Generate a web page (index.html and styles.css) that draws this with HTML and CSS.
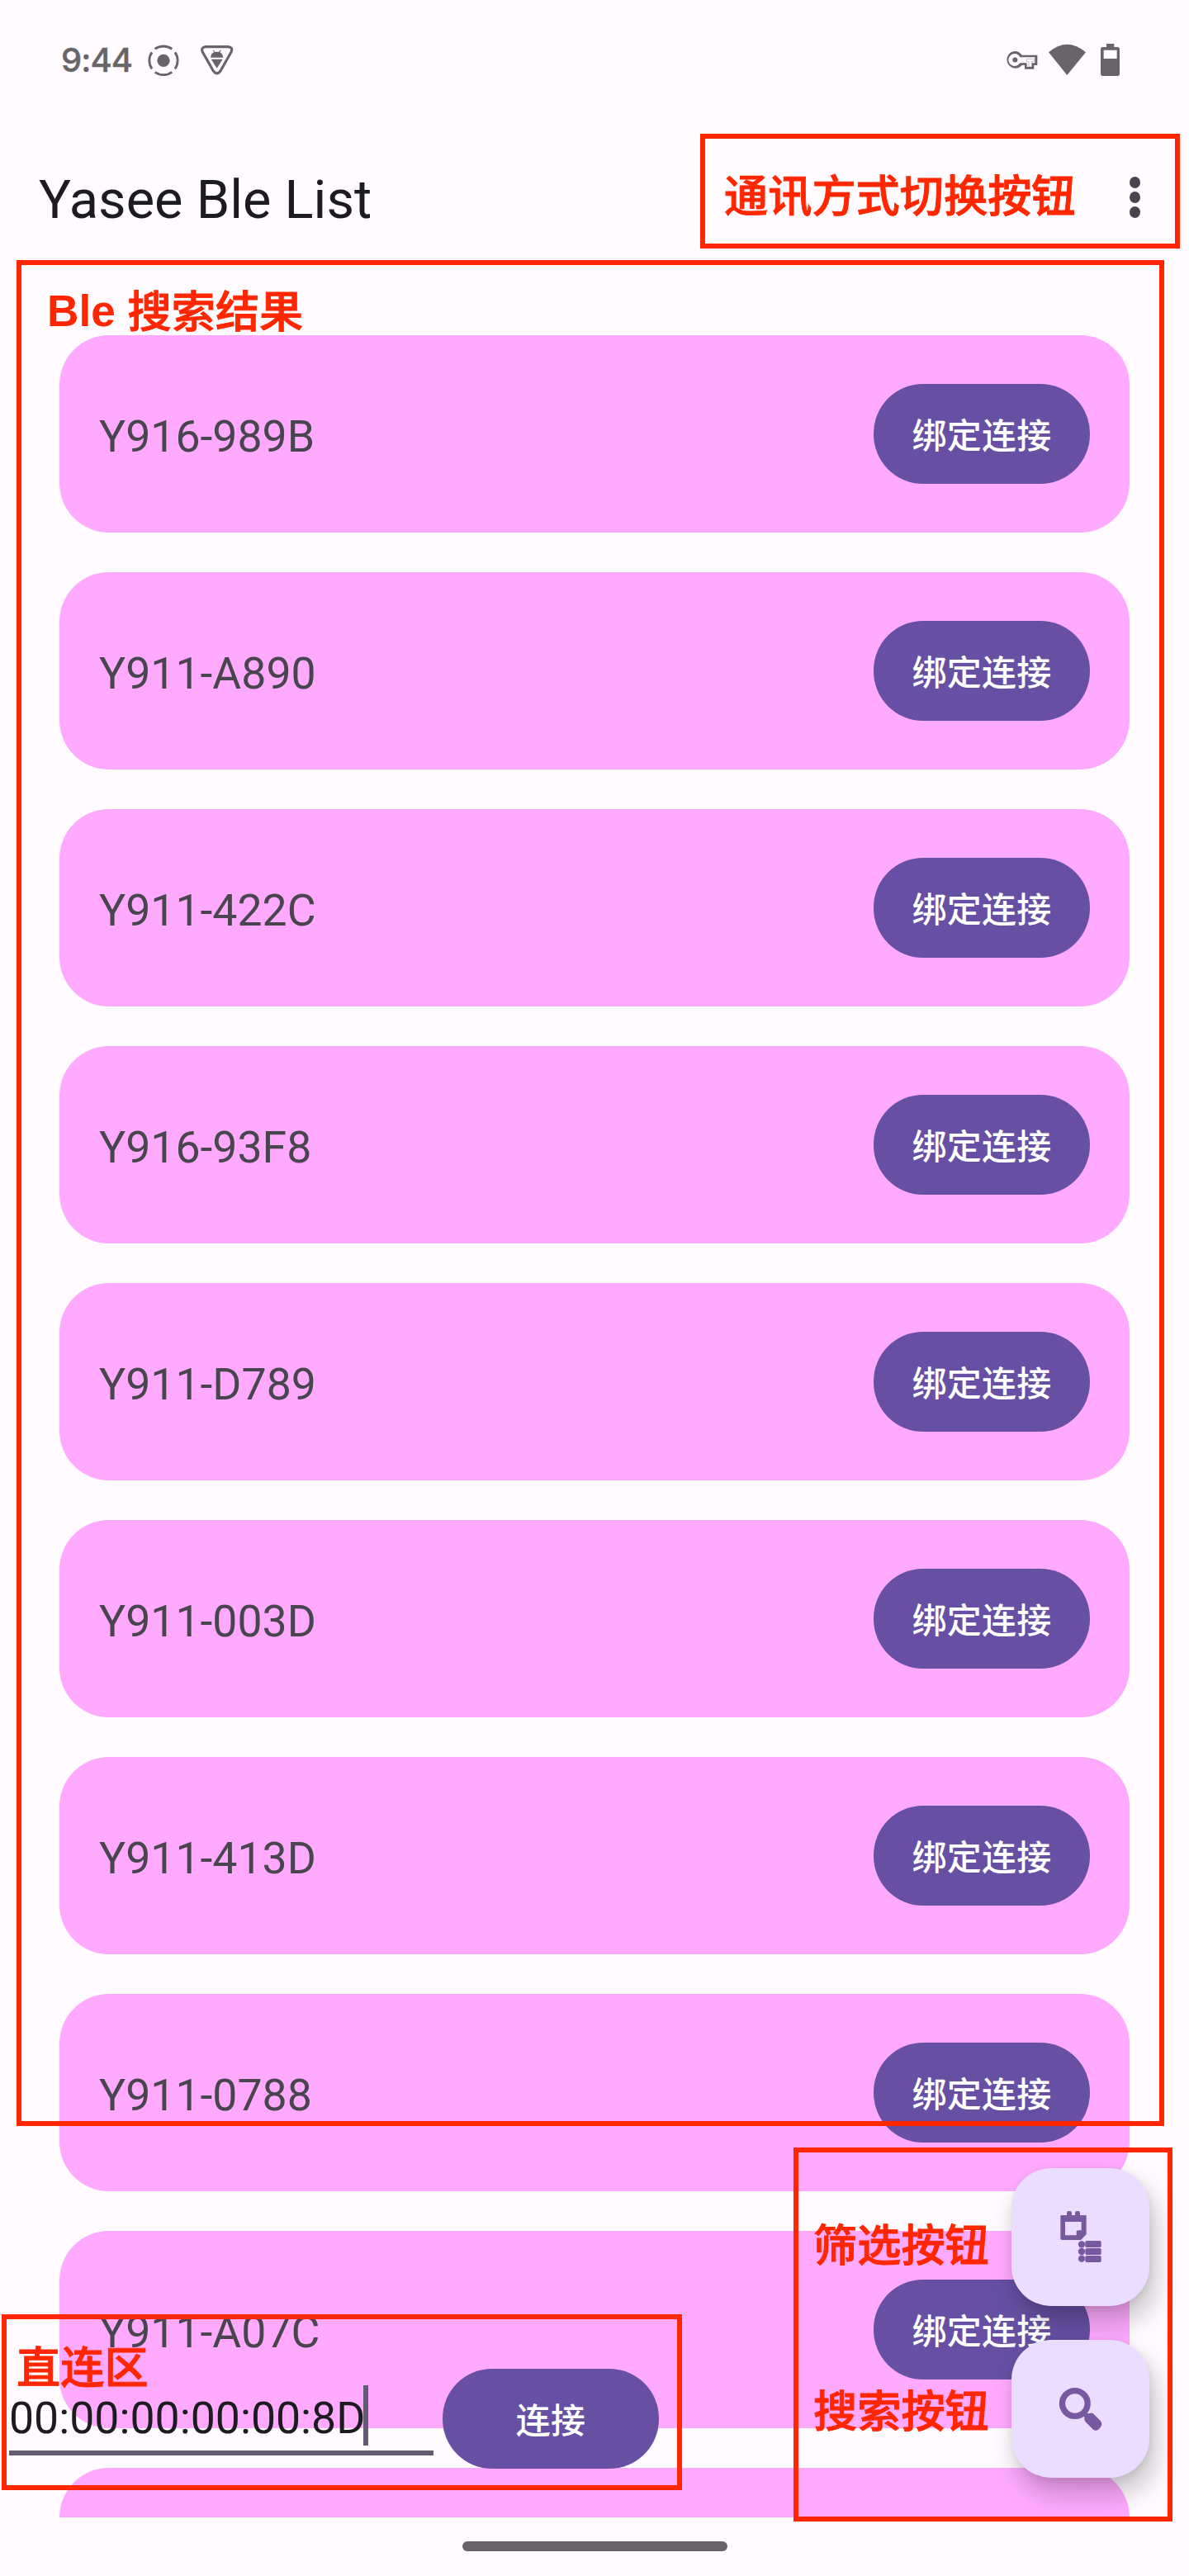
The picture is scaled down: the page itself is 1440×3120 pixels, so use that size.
FILE: index.html
```html
<!DOCTYPE html>
<html lang="zh-CN">
<head>
<meta charset="utf-8">
<title>Yasee Ble List</title>
<link rel="stylesheet" href="styles.css">
</head>
<body>
<div class="screen">
  <header class="status-bar">
    <div class="status-left">
      <span class="clock">9:44</span>
      <svg class="icon-record" viewBox="536 162 114 116">
        <circle cx="593" cy="220" r="23" fill="currentColor"/>
        <g fill="none" stroke="currentColor" stroke-width="8.5">
          <path d="M562 178A52.5 52.5 0 0 1 624 178"/>
          <path d="M562 262A52.5 52.5 0 0 0 624 262"/>
          <path d="M551 190A52.5 52.5 0 0 0 551 250"/>
          <path d="M635 190A52.5 52.5 0 0 1 635 250"/>
        </g>
      </svg>
      <svg class="icon-bug" viewBox="728 166 120 112">
        <path d="M746 174H828Q847 176 839 193L800 262Q787 279 774 262L735 193Q728 176 746 174Z" fill="none" stroke="currentColor" stroke-width="9.5"/>
        <path d="M764 213Q766 197 777 194L772 186H776L780 193Q787 191 794 193L799 186H803L798 194Q808 199 810 213Z" fill="currentColor"/>
        <path d="M766 219H808L787 252Z" fill="currentColor"/>
      </svg>
    </div>
    <svg class="status-right" viewBox="114 66 417 123">
      <path fill-rule="evenodd" fill="currentColor" d="M147 96A31 31 0 0 1 173 110H229V147H217V161H183V147H173A31 31 0 1 1 147 96ZM147 105A22.500 22.500 0 1 0 166 139H191V153H209V139H220V118H166A22.500 22.500 0 0 0 147 105Z"/>
      <circle cx="148" cy="127.500" r="9" fill="currentColor"/>
      <path d="M190 124H217V133H209V153H198V133H190Z" fill="none" stroke="currentColor" stroke-width="3" opacity=".35"/>
      <path d="M270 100Q337 43 405 100L337 183Z" fill="currentColor"/>
      <path fill-rule="evenodd" fill="currentColor" d="M480 69H508V81H520Q528 81 528 89V178Q528 186 520 186H467Q459 186 459 178V89Q459 81 467 81H480ZM470 92V123H518V92Z"/>
    </svg>
  </header>

  <div class="app-bar">
    <h1 class="title">Yasee Ble List</h1>
    <div class="overflow-menu"><i></i><i></i><i></i></div>
  </div>

  <main class="device-list">
    <div class="device"><span class="name">Y916-989B</span><button class="btn">绑定连接</button></div>
    <div class="device"><span class="name">Y911-A890</span><button class="btn">绑定连接</button></div>
    <div class="device"><span class="name">Y911-422C</span><button class="btn">绑定连接</button></div>
    <div class="device"><span class="name">Y916-93F8</span><button class="btn">绑定连接</button></div>
    <div class="device"><span class="name">Y911-D789</span><button class="btn">绑定连接</button></div>
    <div class="device"><span class="name">Y911-003D</span><button class="btn">绑定连接</button></div>
    <div class="device"><span class="name">Y911-413D</span><button class="btn">绑定连接</button></div>
    <div class="device"><span class="name">Y911-0788</span><button class="btn">绑定连接</button></div>
    <div class="device"><span class="name">Y911-A07C</span><button class="btn">绑定连接</button></div>
    <div class="device"></div>
  </main>

  <footer class="nav-bar"><div class="nav-handle"></div></footer>

  <div class="direct-connect">
    <div class="field"><span class="mac">00:00:00:00:00:8D</span><span class="caret"></span></div>
    <button class="btn">连接</button>
  </div>

  <div class="fabs">
    <button class="fab" aria-label="筛选">
      <svg viewBox="45 48 501 501">
        <g fill="currentColor">
          <rect x="246" y="204" width="18" height="24" rx="7"/>
          <rect x="276" y="204" width="18" height="24" rx="7"/>
          <path fill-rule="evenodd" d="M228 219H313Q317 219 317 223V289L297 309H228Q223 309 223 304V223Q223 219 228 219ZM240 243V292H281V280Q281 274 287 274H299V243Z"/>
          <circle cx="300" cy="325" r="12.500"/><circle cx="300" cy="351" r="12.500"/><circle cx="300" cy="377" r="12.500"/>
          <rect x="313" y="312" width="58" height="24" rx="5"/>
          <rect x="313" y="339" width="58" height="24" rx="5"/>
          <rect x="313" y="366" width="58" height="24" rx="5"/>
        </g>
      </svg>
    </button>
    <button class="fab" aria-label="搜索">
      <svg viewBox="45 42 501 501">
        <circle cx="275.500" cy="273" r="46" fill="none" stroke="currentColor" stroke-width="22"/>
        <path d="M304 304L322 322" stroke="currentColor" stroke-width="17"/>
        <path d="M310 320Q309 314 315 311L333 308Q340 307 344 312L369 337Q376 347 370 357L364 365Q354 375 342 368L314 340Q310 336 310 331Z" fill="currentColor"/>
      </svg>
    </button>
  </div>

  <section class="note note-menu"><span>通讯方式切换按钮</span></section>
  <section class="note note-results"><span><b>Ble </b><span class="cjk">搜索结果</span></span></section>
  <section class="note note-fabs"><span>筛选按钮</span><span>搜索按钮</span></section>
  <section class="note note-direct"><span>直连区</span></section>
</div>
</body>
</html>
```
FILE: styles.css
```css
* { box-sizing: border-box; }
body { margin: 0; background: #fffbff; }
button { border: 0; padding: 0; margin: 0; }

.screen {
  position: relative;
  display: flex;
  flex-direction: column;
  width: 1440px;
  height: 3120px;
  overflow: hidden;
  background: #fffbff;
  font-family: Roboto, "Noto Sans CJK SC", sans-serif;
}

/* status bar */
.status-bar {
  display: flex;
  justify-content: space-between;
  align-items: center;
  height: 146px;
  padding: 0 83px 0 74px;
  color: #686568;
}
.status-left { display: flex; align-items: center; }
.clock {
  width: 105px;
  font: 500 40px/50px Inter, sans-serif;
  letter-spacing: -0.9px;
  -webkit-text-stroke: 0.4px currentColor;
}
.icon-record { width: 38px; height: 38.7px; }
.icon-bug { width: 40px; height: 37.3px; margin-left: 26px; }
.status-right { width: 139px; height: 41px; margin-bottom: 1px; }

/* app bar */
.app-bar {
  display: flex;
  justify-content: space-between;
  align-items: center;
  height: 185px;
  padding: 0 59px 0 47px;
}
.title {
  margin: 0;
  padding-top: 7px;
  font-size: 65px;
  font-weight: 400;
  line-height: 80px;
  color: #1c1b1f;
}
.overflow-menu { display: flex; flex-direction: column; gap: 4px; }
.overflow-menu i { width: 13px; height: 14px; border-radius: 50%; background: #49454f; }

/* device list */
.device-list {
  display: flex;
  flex-direction: column;
  gap: 48px;
  height: 2718px;
  padding: 75px 72px 0;
  overflow: hidden;
}
.device {
  display: flex;
  flex: none;
  justify-content: space-between;
  align-items: center;
  height: 239px;
  padding: 0 48px;
  border-radius: 60px;
  background: #ffaaff;
}
.name { padding-top: 6px; font-size: 53.6px; line-height: 64px; color: #49454f; }
.btn {
  width: 262px;
  height: 121px;
  padding-bottom: 2px;
  border-radius: 60px;
  background: #6750a4;
  color: #fff;
  font: 500 42px/60px "Noto Sans CJK SC", sans-serif;
  letter-spacing: 0.3px;
}

/* gesture bar */
.nav-bar { display: flex; justify-content: center; padding-top: 29px; }
.nav-handle { width: 321px; height: 12px; border-radius: 6px; background: #666467; }

/* direct connection row */
.direct-connect {
  position: absolute;
  left: 11px;
  top: 2869px;
  display: flex;
  gap: 11px;
}
.field {
  display: flex;
  width: 514px;
  height: 105px;
  padding-top: 20px;
  border-bottom: 6px solid #625b71;
}
.mac { width: 429px; padding-top: 8px; font-size: 53.6px; line-height: 64px; color: #1c1b1f; white-space: nowrap; }
.caret { width: 6px; height: 73px; background: #625b71; }

/* floating buttons */
.fabs {
  position: absolute;
  left: 1225px;
  top: 2626px;
  display: flex;
  flex-direction: column;
  gap: 41px;
}
.fab {
  width: 167px;
  height: 167px;
  border-radius: 48px;
  background: #eaddff;
  color: #755a9f;
  box-shadow: 7px 19px 32px rgba(0, 0, 0, .23), 1px 2px 10px rgba(0, 0, 0, .07);
}
.fab svg { display: block; width: 167px; height: 167px; }

/* callouts */
.note {
  position: absolute;
  display: flex;
  flex-direction: column;
  border: 6px solid #ff2600;
  color: #ff2600;
  font: 500 53.2px/60px "Liberation Sans", "Noto Sans CJK SC", sans-serif;
  white-space: nowrap;
  -webkit-text-stroke: 0.9px currentColor;
}
.note b { font-weight: 700; -webkit-text-stroke: 0; }
.note .cjk { vertical-align: -2px; line-height: 1; }
.note-menu { left: 848px; top: 162px; width: 581px; height: 139px; padding: 41px 0 0 23px; }
.note-results { left: 20px; top: 315px; width: 1390px; height: 2260px; padding: 26px 0 0 31px; }
.note-fabs { left: 961px; top: 2601px; width: 459px; height: 453px; gap: 141px; padding: 84px 0 0 18px; }
.note-direct { left: 2px; top: 2803px; width: 824px; height: 213px; padding: 30px 0 0 12px; }
```
